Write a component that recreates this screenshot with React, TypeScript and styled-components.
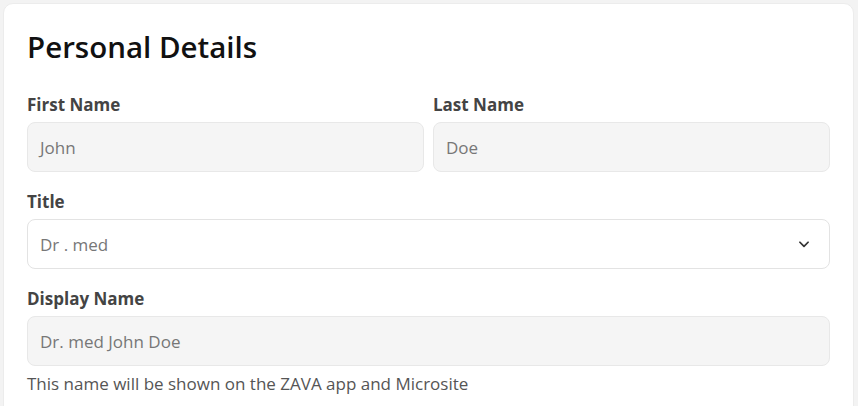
import React from "react";
import styled, { createGlobalStyle } from "styled-components";

const GlobalStyle = createGlobalStyle`
  html, body {
    margin: 0;
    padding: 0;
    background: #f3f3f3;
    font-family: "Open Sans", "Noto Sans", sans-serif;
    -webkit-font-smoothing: antialiased;
  }
  * { box-sizing: border-box; }
`;

const Page = styled.div`
  padding: 3px 4px 0 3px;
  height: 406px;
  overflow: hidden;
`;

const Card = styled.section`
  background: #ffffff;
  border: 1px solid #ececec;
  border-radius: 10px;
  padding: 24px 23px 40px 23px;
  min-height: 460px;
`;

const Heading = styled.h2`
  margin: 0 0 29px 0;
  font-size: 29.5px;
  font-weight: 600;
  color: #111111;
  line-height: 38px;
`;

const Row = styled.div`
  display: grid;
  grid-template-columns: 1fr 1fr;
  gap: 9px;
`;

const Field = styled.div`
  display: flex;
  flex-direction: column;
  margin-bottom: 20px;
`;

const Label = styled.label`
  font-size: 17px;
  font-weight: 700;
  color: #444444;
  line-height: 20px;
  margin-bottom: 7px;
`;

const Input = styled.div<{ $filled?: boolean }>`
  height: 50px;
  display: flex;
  align-items: center;
  justify-content: space-between;
  padding: 0 18px 0 12px;
  border: 1px solid ${(p) => (p.$filled ? "#e8e8e8" : "#e3e3e3")};
  background: ${(p) => (p.$filled ? "#f5f5f5" : "#ffffff")};
  border-radius: 8px;
  font-size: 17px;
  color: #777777;
`;

const Helper = styled.p`
  margin: 8px 0 0 0;
  font-size: 17px;
  color: #555555;
  line-height: 20px;
`;

const Chevron = () => (
  <svg width="14" height="14" viewBox="0 0 24 24" fill="none" stroke="#333" strokeWidth="3" strokeLinecap="round" strokeLinejoin="round">
    <path d="M5 9l7 7 7-7" />
  </svg>
);

export default function App() {
  return (
    <>
      <GlobalStyle />
      <Page>
        <Card>
          <Heading>Personal Details</Heading>
          <Row>
            <Field>
              <Label>First Name</Label>
              <Input $filled>John</Input>
            </Field>
            <Field>
              <Label>Last Name</Label>
              <Input $filled>Doe</Input>
            </Field>
          </Row>
          <Field>
            <Label>Title</Label>
            <Input>
              <span>Dr . med</span>
              <Chevron />
            </Input>
          </Field>
          <Field>
            <Label>Display Name</Label>
            <Input $filled>Dr. med John Doe</Input>
            <Helper>This name will be shown on the ZAVA app and Microsite</Helper>
          </Field>
        </Card>
      </Page>
    </>
  );
}
